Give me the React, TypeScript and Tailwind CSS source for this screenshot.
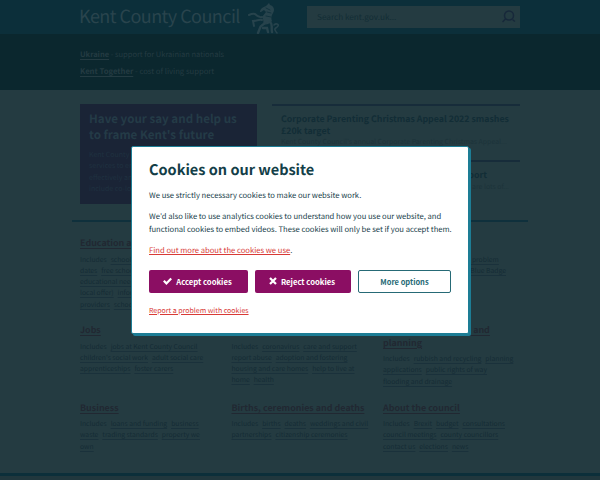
import { ReactNode } from "react";

type Topic = { title: string[]; lines: string[][] };

// each line is a list of links, the first line is prefixed with "Includes"
const topics: Topic[] = [
  {
    title: ["Education and children"],
    lines: [
      ["school term"],
      ["dates", "free school meals"],
      ["educational needs (SEND"],
      ["local offer)", "information for"],
      ["providers", "school places"],
    ],
  },
  {
    title: ["Leisure and community"],
    lines: [["libraries", "country parks"], ["archives", "registration"]],
  },
  {
    title: ["Roads and travel"],
    lines: [["potholes", "report a problem"], ["travelling around", "parking - Blue Badge"]],
  },
  {
    title: ["Jobs"],
    lines: [
      ["jobs at Kent County Council"],
      ["children's social work", "adult social care"],
      ["apprenticeships", "foster carers"],
    ],
  },
  {
    title: ["Social care and health"],
    lines: [
      ["coronavirus", "care and support"],
      ["report abuse", "adoption and fostering"],
      ["housing and care homes", "help to live at"],
      ["home", "health"],
    ],
  },
  {
    title: ["Environment, waste and", "planning"],
    lines: [
      ["rubbish and recycling", "planning"],
      ["applications", "public rights of way"],
      ["flooding and drainage"],
    ],
  },
  {
    title: ["Business"],
    lines: [
      ["loans and funding", "business"],
      ["waste", "trading standards", "property we"],
      ["own"],
    ],
  },
  {
    title: ["Births, ceremonies and deaths"],
    lines: [
      ["births", "deaths", "weddings and civil"],
      ["partnerships", "citizenship ceremonies"],
    ],
  },
  {
    title: ["About the council"],
    lines: [
      ["Brexit", "budget", "consultations"],
      ["council meetings", "county councillors"],
      ["contact us", "elections", "news"],
    ],
  },
];

function TopicBlock({ title, lines }: Topic) {
  return (
    <section className="whitespace-nowrap">
      <h2 className="mb-[4px] text-[8.93px] font-bold leading-[12.5px] text-[#212832] underline underline-offset-2">
        {title.map((t) => (
          <span key={t} className="block">
            {t}
          </span>
        ))}
      </h2>
      {lines.map((links, i) => (
        <p key={i} className="flex gap-1 text-[6.75px] leading-[11.3px] text-[#142b35]">
          {i === 0 && <span>Includes</span>}
          {links.map((l) => (
            <a key={l} className="underline decoration-[#1a313b] underline-offset-2">
              {l}
            </a>
          ))}
        </p>
      ))}
    </section>
  );
}

function Horse() {
  return (
    <svg viewBox="0 0 36 31" className="h-[31px] w-[36px]" fill="#27434c" stroke="#27434c" strokeLinecap="round">
      <path
        d="M15 9c0-3 3-5 6-6l3-3 1 2c4 1 5 5 3 8-2 3-2 6-1 8-2 3-6 4-9 3 1-3 0-5-1-7l4-5-2-2-3 2z"
        stroke="none"
      />
      <path d="M17 14c-3 1-5-1-7-3-2-1-4 0-6 1M17 17c-3-1-5 1-9 1l1 5" fill="none" strokeWidth="2" />
      <path d="M20 20c-2 2-5 3-5 5l-2 5M25 19c3 2 1 5 2 10M18 25h4l1 4" fill="none" strokeWidth="2.4" />
      <path d="M29 22c2-2 5-1 4 1s-4 2-3 4 1 2 2 3" fill="none" strokeWidth="1.6" />
      <path d="M21 5l4 2M22 9l4 1M21 13l5 1" stroke="#0c2f3a" strokeWidth=".8" />
    </svg>
  );
}

function SearchIcon() {
  return (
    <svg viewBox="0 0 14 14" className="h-[14px] w-[14px]" fill="none" stroke="#17283a" strokeWidth="1.5">
      <circle cx="7" cy="5.5" r="4.5" />
      <path d="M3.7 8.8L.5 12M10.5 9.5l2.3 2" />
    </svg>
  );
}

function Button({ width, children }: { width: string; children: ReactNode }) {
  return (
    <button
      className={`${width} flex h-[23px] items-center justify-center gap-[4px] rounded-[2px] bg-[#8b0e63] pb-px pr-[2px] text-[7.7px] font-bold text-white`}
    >
      {children}
    </button>
  );
}

function CookieDialog() {
  return (
    <div
      role="dialog"
      className="absolute left-[131px] top-[146px] h-[188px] w-[338px] whitespace-nowrap rounded-[2px] border border-[#1d7d95] bg-white pl-[17px] pt-[13px] text-[7.63px] leading-[13px] text-[#17404a] shadow-[2px_2px_0_#1d7d95]"
    >
      <h1 className="text-[14.5px] font-bold leading-[20px] text-[#133e48]">Cookies on our website</h1>
      <p className="mt-[9px]">We use strictly necessary cookies to make our website work.</p>
      <p className="mt-[8px]">
        We'd also like to use analytics cookies to understand how you use our website, and
        <br />
        functional cookies to embed videos. These cookies will only be set if you accept them.
      </p>
      <p className="mt-[8px]">
        <a className="text-[#d83a36] underline underline-offset-1">Find out more about the cookies we use</a>.
      </p>
      <div className="mt-[13px] flex gap-[7px]">
        <Button width="w-[99px]">
          <svg viewBox="0 0 9 8" className="h-[8px] w-[9px]" fill="none" stroke="white" strokeWidth="2.2">
            <path d="M.8 3.8l2.6 2.6L8.2 1.4" />
          </svg>
          Accept cookies
        </Button>
        <Button width="w-[96px]">
          <svg viewBox="0 0 8 8" className="h-[8px] w-[8px]" fill="none" stroke="white" strokeWidth="2.2">
            <path d="M1 1l6 6M7 1L1 7" />
          </svg>
          Reject cookies
        </Button>
        <button className="flex h-[23px] w-[93px] items-center justify-center rounded-[2px] border border-[#266a76] pb-px text-[7.5px] font-bold text-[#266a76]">
          More options
        </button>
      </div>
      <p className="mt-[12px] text-[7px]">
        <a className="text-[#d83a36] underline underline-offset-1">Report a problem with cookies</a>
      </p>
    </div>
  );
}

export default function App() {
  return (
    <div className="relative flex h-[480px] w-[600px] flex-col overflow-hidden bg-[#243b41] font-['Noto_Sans_CJK_SC',sans-serif] [text-rendering:geometricPrecision]">
      <header className="flex h-[34px] shrink-0 bg-[#0c2f3a] pl-[79px]">
        <div className="w-[166px] whitespace-nowrap pt-[4px] text-[18px] leading-[25px] tracking-[-0.55px] text-[#29444d]">
          Kent County Council
        </div>
        <div className="pt-[3px]">
          <Horse />
        </div>
        <div className="ml-[26px] mt-[6px] flex h-[22px] w-[213px] items-center justify-between bg-[#243b41] pl-[10px] pr-[4px] text-[8.2px] text-[#122d35]">
          <span>Search kent.gov.uk...</span>
          <SearchIcon />
        </div>
      </header>

      <div className="h-[56px] shrink-0 bg-[#0b272e] pl-[80px] pt-[12px] text-[7.5px] leading-[17.3px] text-[#243b42]">
        <p>
          <a className="font-bold underline underline-offset-2">Ukraine</a> - support for Ukrainian nationals
        </p>
        <p className="text-[7.7px]">
          <a className="font-bold underline underline-offset-2">Kent Together</a> - cost of living support
        </p>
      </div>

      <main className="flex-1">
        <div className="flex h-[130px] gap-[15px] pl-[80px] pt-[14px]">
          <div className="h-[100px] w-[177px] whitespace-nowrap bg-[#1a2436] pl-[9px] pt-[7px] text-[#243b47]">
            <h2 className="text-[11.6px] font-bold leading-[16px]">
              Have your say and help us
              <br />
              to frame Kent's future
            </h2>
            <p className="mt-[7px] text-[7px] leading-[11.3px] text-[#1f3140]">
              Kent County Council
              <br />
              services to ensure
              <br />
              effectively and
              <br />
              include co-location
            </p>
          </div>
          <div className="w-[248px] whitespace-nowrap text-[#122d36]">
            <article className="h-[56px] border-t-2 border-[#172c3a] pl-[9px] pt-[7px]">
              <h3 className="text-[8.8px] font-bold leading-[12px]">
                Corporate Parenting Christmas Appeal 2022 smashes
                <br />
                £20k target
              </h3>
              <p className="text-[6.95px] leading-[11px] text-[#1c333a]">
                Kent County Council's annual Corporate Parenting Christmas Appeal...
              </p>
            </article>
            <article className="border-t-2 border-[#172c3a] pl-[9px] pt-[7px]">
              <h3 className="w-[206px] text-right text-[8.8px] font-bold leading-[12px]">
                Cost of living: help with bills and support
              </h3>
              <p className="w-[228px] text-right text-[6.9px] leading-[11px] text-[#1c333a]">
                If you are worried about living costs there are lots of...
              </p>
            </article>
          </div>
        </div>

        <div className="mx-[72px] border-t-2 border-[#0f303c]" />

        <div className="grid h-[251px] grid-cols-[151.5px_151.5px_145px] grid-rows-[87px_77.5px_70px] pl-[80px] pt-[15px]">
          {topics.map((t) => (
            <TopicBlock key={t.title[0]} {...t} />
          ))}
        </div>

        <div className="h-[3px] bg-[#0c2f3a]" />
        <div className="h-[10px] bg-[#21373d]" />
      </main>

      <CookieDialog />
    </div>
  );
}
